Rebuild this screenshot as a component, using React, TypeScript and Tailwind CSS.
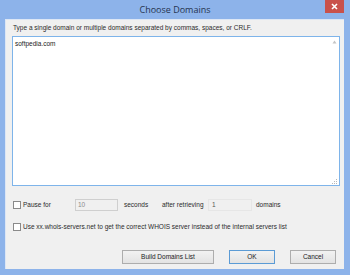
import React from "react";

// Win8-style "Choose Domains" dialog
const sans = { fontFamily: '"Liberation Sans", Arial, sans-serif' };

const Checkbox = () => (
  <span className="inline-block w-[8px] h-[8px] border border-[#8a8a8a] bg-white shrink-0" />
);

const Button = ({ label, width, primary }: { label: string; width: string; primary?: boolean }) => (
  <div
    className={`${width} h-[14px] flex items-center justify-center border ${
      primary ? "border-[#5b9bd5]" : "border-[#adadad]"
    } bg-gradient-to-b from-[#f2f2f2] to-[#e3e3e3] text-[6.5px] text-[#222]`}
  >
    {label}
  </div>
);

const App = () => {
  return (
    <div className="w-[350px] h-[275px] bg-[#8db3ea] flex flex-col overflow-hidden" style={sans}>
      {/* title bar */}
      <div className="h-[19px] relative flex items-center justify-center shrink-0">
        <span className="text-[9px] text-[#26344f] pt-[1px]" style={{ fontFamily: '"Open Sans", "Noto Sans", sans-serif' }}>
          Choose Domains
        </span>
        <div className="absolute right-[6px] top-0 w-[19px] h-[13px] bg-[#c9514b] flex items-center justify-center">
          <svg width="7" height="7" viewBox="0 0 7 7">
            <path d="M1 1L6 6M6 1L1 6" stroke="#fff" strokeWidth="1.6" />
          </svg>
        </div>
      </div>

      {/* client area */}
      <div className="ml-[5px] mr-[6px] mb-[6px] flex-1 bg-[#f0f0f0] border-t border-l border-[#dce6f5] pl-[6px] pr-[8px] pt-[1px]">
        <div className="h-[14px] leading-[14px] pl-[1px] text-[6.5px] text-[#2b2b2b]">
          Type a single domain or multiple domains separated by commas, spaces, or CRLF.
        </div>

        <div className="mt-[1px] w-[328px] h-[150px] border border-[#7eb4ea] bg-white relative">
          <div className="pl-[2px] pt-[2px] text-[6.5px] text-[#222]">softpedia.com</div>
          <svg className="absolute right-[2px] top-[3px]" width="5" height="4" viewBox="0 0 5 4">
            <path d="M2.5 0.5L4.5 3.5H0.5Z" fill="#c4c4c4" />
          </svg>
          <svg className="absolute right-[1px] bottom-[1px]" width="6" height="6" viewBox="0 0 6 6">
            <rect x="4" y="1" width="1" height="1" fill="#b8b8b8" />
            <rect x="2" y="3" width="1" height="1" fill="#b8b8b8" />
            <rect x="4" y="3" width="1" height="1" fill="#b8b8b8" />
            <rect x="0" y="5" width="1" height="1" fill="#b8b8b8" />
            <rect x="2" y="5" width="1" height="1" fill="#b8b8b8" />
            <rect x="4" y="5" width="1" height="1" fill="#b8b8b8" />
          </svg>
        </div>

        {/* pause row */}
        <div className="mt-[12px] h-[13px] flex items-center pl-[1px] text-[6.5px] text-[#2b2b2b]">
          <Checkbox />
          <span className="ml-[2px] w-[52px]">Pause for</span>
          <div className="w-[43px] h-[12px] border border-[#cfcfcf] bg-[#f0f0f0] flex items-center pl-[2px] text-[#8a8a8a]">
            10
          </div>
          <span className="ml-[6px] w-[38px]">seconds</span>
          <span className="w-[46px]">after retrieving</span>
          <div className="w-[44px] h-[12px] border border-[#e6e6e6] bg-[#f0f0f0] flex items-center pl-[3px] text-[#555]">
            1
          </div>
          <span className="ml-[4px]">domains</span>
        </div>

        {/* whois row */}
        <div className="mt-[9px] h-[13px] flex items-center pl-[1px] text-[6.5px] text-[#2b2b2b]">
          <Checkbox />
          <span className="ml-[2px]">
            Use xx.whois-servers.net to get the correct WHOIS server instead of the internal servers list
          </span>
        </div>

        {/* buttons */}
        <div className="mt-[17px] flex justify-end gap-[15px]">
          <Button label="Build Domains List" width="w-[92px]" />
          <Button label="OK" width="w-[46px]" primary />
          <Button label="Cancel" width="w-[46px]" />
        </div>
      </div>
    </div>
  );
};

export default App;
